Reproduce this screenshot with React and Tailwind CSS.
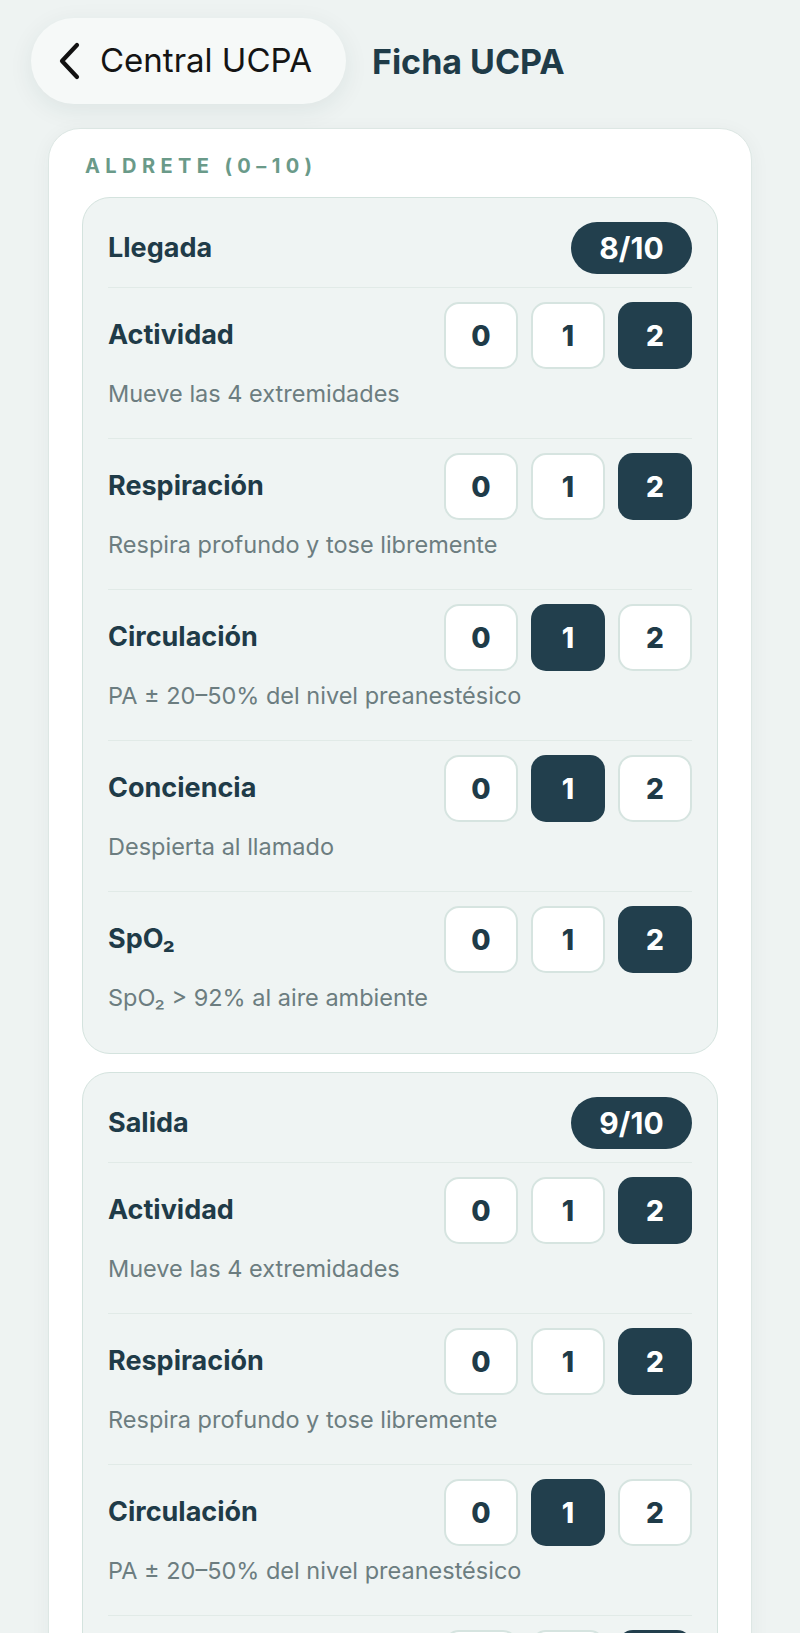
import React from "react";

const llegada = [
  { name: "Actividad", desc: "Mueve las 4 extremidades", value: 2 },
  { name: "Respiración", desc: "Respira profundo y tose libremente", value: 2 },
  { name: "Circulación", desc: "PA ± 20–50% del nivel preanestésico", value: 1 },
  { name: "Conciencia", desc: "Despierta al llamado", value: 1 },
  { name: "SpO₂", desc: "SpO₂ > 92% al aire ambiente", value: 2 },
];

const salida = [
  { name: "Actividad", desc: "Mueve las 4 extremidades", value: 2 },
  { name: "Respiración", desc: "Respira profundo y tose libremente", value: 2 },
  { name: "Circulación", desc: "PA ± 20–50% del nivel preanestésico", value: 1 },
  { name: "Conciencia", desc: "Completamente despierto", value: 2 },
  { name: "SpO₂", desc: "SpO₂ > 92% al aire ambiente", value: 2 },
];

function ScoreButtons({ value }) {
  return (
    <div className="flex gap-[13px]">
      {[0, 1, 2].map((n) =>
        n === value ? (
          <div
            key={n}
            className="flex h-[67px] w-[74px] items-center justify-center rounded-[15px] bg-[#223f4d] text-[28px] font-extrabold text-white"
          >
            {n}
          </div>
        ) : (
          <div
            key={n}
            className="flex h-[67px] w-[74px] items-center justify-center rounded-[15px] border-2 border-[#d6e4e0] bg-white text-[28px] font-extrabold text-[#1f3b48]"
          >
            {n}
          </div>
        )
      )}
    </div>
  );
}

function Section({ title, score, items }) {
  return (
    <div className="rounded-[28px] border border-[#d4e3de] bg-[#eff4f3] px-[25px] pt-[24px] pb-[11px]">
      <div className="flex items-center justify-between border-b border-[#e1eae7] pb-[13px]">
        <span className="text-[27px] font-bold text-[#1f3b48]">{title}</span>
        <span className="flex h-[52px] w-[121px] items-center justify-center rounded-full bg-[#223f4d] text-[30px] font-bold text-white">
          {score}
        </span>
      </div>
      {items.map((it, i) => (
        <div
          key={it.name}
          className={
            i < items.length - 1
              ? "border-b border-[#e1eae7] pt-[14px] pb-[29px]"
              : "pt-[14px] pb-[29px]"
          }
        >
          <div className="flex items-center justify-between">
            <span className="text-[27px] font-bold text-[#1f3b48]">{it.name}</span>
            <ScoreButtons value={it.value} />
          </div>
          <p className="mt-[10px] text-[23.5px] leading-[30px] text-[#6c7d80]">{it.desc}</p>
        </div>
      ))}
    </div>
  );
}

export default function App() {
  return (
    <div
      className="min-h-screen bg-[#eef3f2] pt-[18px]"
      style={{ fontFamily: "Inter, 'Noto Sans', sans-serif" }}
    >
      {/* top bar */}
      <div className="flex items-center pl-[31px]">
        <div className="flex h-[86px] items-center rounded-full bg-[#f6f9f8] pr-[34px] pl-[25px] shadow-[0_6px_24px_rgba(30,60,60,0.08)]">
          <svg width="26" height="40" viewBox="0 0 26 40" fill="none">
            <path
              d="M21 4 L6 20 L21 36"
              stroke="#111"
              strokeWidth="4.2"
              strokeLinecap="round"
              strokeLinejoin="round"
            />
          </svg>
          <span className="ml-[18px] text-[33px] text-[#141414]">Central UCPA</span>
        </div>
        <span className="ml-[26px] text-[34px] font-bold text-[#1f3b48]">Ficha UCPA</span>
      </div>

      {/* card */}
      <div className="mx-[48px] mt-[24px] rounded-[32px] border border-[#dde7e4] bg-white px-[33px] pt-[22px] pb-[40px] shadow-[0_4px_20px_rgba(30,60,60,0.05)]">
        <div className="ml-[3px] text-[20px] font-bold uppercase tracking-[0.27em] text-[#6a9a89]">
          Aldrete (0–10)
        </div>
        <div className="mt-[16px] flex flex-col gap-[18px]">
          <Section title="Llegada" score="8/10" items={llegada} />
          <Section title="Salida" score="9/10" items={salida} />
        </div>
      </div>
    </div>
  );
}
